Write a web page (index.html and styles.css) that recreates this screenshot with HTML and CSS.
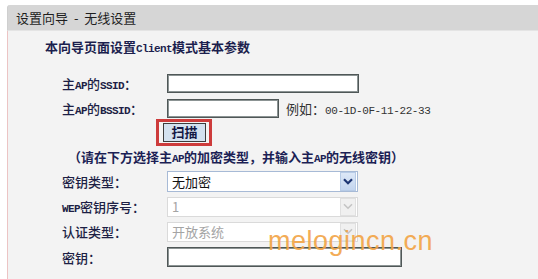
FILE: index.html
```html
<!DOCTYPE html>
<html lang="zh-CN">
<head>
<meta charset="utf-8">
<title>设置向导 - 无线设置</title>
<link rel="stylesheet" href="styles.css">
</head>
<body>
<div class="panel">
  <div class="header">设置向导 - 无线设置</div>
  <div class="content">
    <p class="intro">本向导页面设置<span class="en">Client</span>模式基本参数</p>
    <div class="form">
      <div class="row r25">
        <span class="label">主<span class="en">AP</span>的<span class="en">SSID</span>：</span>
        <input class="text ssid" type="text">
      </div>
      <div class="row r25">
        <span class="label">主<span class="en">AP</span>的<span class="en">BSSID</span>：</span>
        <input class="text bssid" type="text">
        <span class="hint">例如：<span class="en mac">00-1D-0F-11-22-33</span></span>
      </div>
      <div class="row r22">
        <span class="label"></span>
        <span class="mark"><button class="btn" type="button">扫描</button></span>
      </div>
      <div class="row r26">
        <span class="notice">（请在下方选择主<span class="en">AP</span>的加密类型，并输入主<span class="en">AP</span>的无线密钥）</span>
      </div>
      <div class="row r25">
        <span class="label">密钥类型：</span>
        <div class="select">
          <span class="value">无加密</span>
          <span class="arrow"><svg width="10" height="7" viewBox="0 0 10 7"><path d="M1 1.2 L5 5.2 L9 1.2" fill="none" stroke="currentColor" stroke-width="2.2"/></svg></span>
        </div>
      </div>
      <div class="row r25">
        <span class="label"><span class="en">WEP</span>密钥序号：</span>
        <div class="select disabled">
          <span class="value">1</span>
          <span class="arrow"><svg width="10" height="7" viewBox="0 0 10 7"><path d="M1 1.2 L5 5.2 L9 1.2" fill="none" stroke="currentColor" stroke-width="1.6"/></svg></span>
        </div>
      </div>
      <div class="row r25">
        <span class="label">认证类型：</span>
        <div class="select disabled">
          <span class="value">开放系统</span>
          <span class="arrow"><svg width="10" height="7" viewBox="0 0 10 7"><path d="M1 1.2 L5 5.2 L9 1.2" fill="none" stroke="currentColor" stroke-width="1.6"/></svg></span>
        </div>
      </div>
      <div class="row r26">
        <span class="label">密钥：</span>
        <input class="text key" type="text">
      </div>
    </div>
    <div class="watermark">melogincn.cn</div>
  </div>
</div>
</body>
</html>
```

FILE: styles.css
```css
* { box-sizing: border-box; }
html, body { margin: 0; padding: 0; background: #ffffff; }
body {
  font-family: "Noto Sans CJK SC", "Liberation Sans", sans-serif;
  font-size: 13px;
  color: #222;
  overflow: hidden;
  height: 279px;
}
.en {
  font-family: "Liberation Mono", monospace;
  font-size: 11px;
  letter-spacing: -0.6px;
  font-weight: bold;
}
.panel {
  margin: 5px 0 0 7px;
}
.header {
  height: 26px;
  line-height: 25px;
  background: #d6d6d6;
  border-bottom: 1px solid #e4e4e4;
  border-left: 1px solid #cfcfcf;
  border-top-left-radius: 3px;
  padding-left: 8px;
  color: #1e1e1e;
  font-size: 13px;
  word-spacing: 3px;
}
.content {
  position: relative;
  background: #f3f3f3;
  border-left: 1px solid #ecc4c4;
  height: 260px;
  padding: 8px 0 0 37px;
}
.intro {
  margin: 0;
  height: 16px;
  line-height: 16px;
  font-weight: bold;
  color: #1c1f4e;
}
.form {
  margin-top: 16px;
  padding-left: 17px;
}
.row {
  display: flex;
  align-items: center;
}
.r25 { height: 25px; }
.r22 { height: 22px; }
.r26 { height: 26px; }
.label {
  width: 105px;
  flex: none;
  color: #1d1f45;
  font-weight: 500;
  font-family: "Noto Sans CJK TC", "Noto Sans CJK SC", sans-serif;
}
.text {
  height: 19px;
  border: 1px solid #4f5757;
  box-shadow: inset 0 0 0 1px #8c9494;
  background: #fff;
  padding: 0 3px;
  margin: 0;
  font: inherit;
}
.ssid { width: 192px; }
.bssid { width: 112px; }
.key { width: 235px; height: 20px; }
.hint {
  margin-left: 7px;
  color: #333;
  font-family: "Noto Sans CJK TC", "Noto Sans CJK SC", sans-serif;
}
.hint .mac { font-weight: normal; letter-spacing: -0.4px; }
.mark {
  display: inline-block;
  border: 3px solid #cd3b3b;
  padding: 1px 3px 1px 4px;
  margin-left: -11px;
}
.btn {
  display: block;
  width: 43px;
  height: 19px;
  padding: 0;
  background: #d3e1ef;
  border: 1px solid #3c3c3c;
  font: inherit;
  font-weight: bold;
  color: #141844;
  line-height: 16px;
}
.notice {
  margin-left: 6px;
  font-weight: bold;
  color: #1c1f55;
  white-space: nowrap;
  font-family: "Noto Sans CJK TC", "Noto Sans CJK SC", sans-serif;
}
.select {
  width: 191px;
  height: 21px;
  border: 1px solid #a7bad6;
  background: #fff;
  display: flex;
  align-items: center;
  justify-content: space-between;
  color: #111;
}
.select .value { padding-left: 4px; }
.select .arrow {
  width: 16px;
  height: 19px;
  margin-right: 1px;
  display: flex;
  align-items: center;
  justify-content: center;
  background: linear-gradient(#dde8f7, #c3d5ef);
  border: 1px solid #b7cbe6;
  color: #1d3573;
}
.select.disabled {
  border-color: #dadada;
  color: #a4a4a4;
  height: 20px;
}
.select.disabled .arrow {
  background: #f0f0f0;
  border-color: #e0e0e0;
  color: #c4c4c4;
  height: 18px;
}
.watermark {
  position: absolute;
  left: 260px;
  top: 197px;
  font-family: "Liberation Sans", sans-serif;
  font-size: 27px;
  line-height: 27px;
  color: #f2a445;
  opacity: 0.9;
  letter-spacing: 0.5px;
}
```
